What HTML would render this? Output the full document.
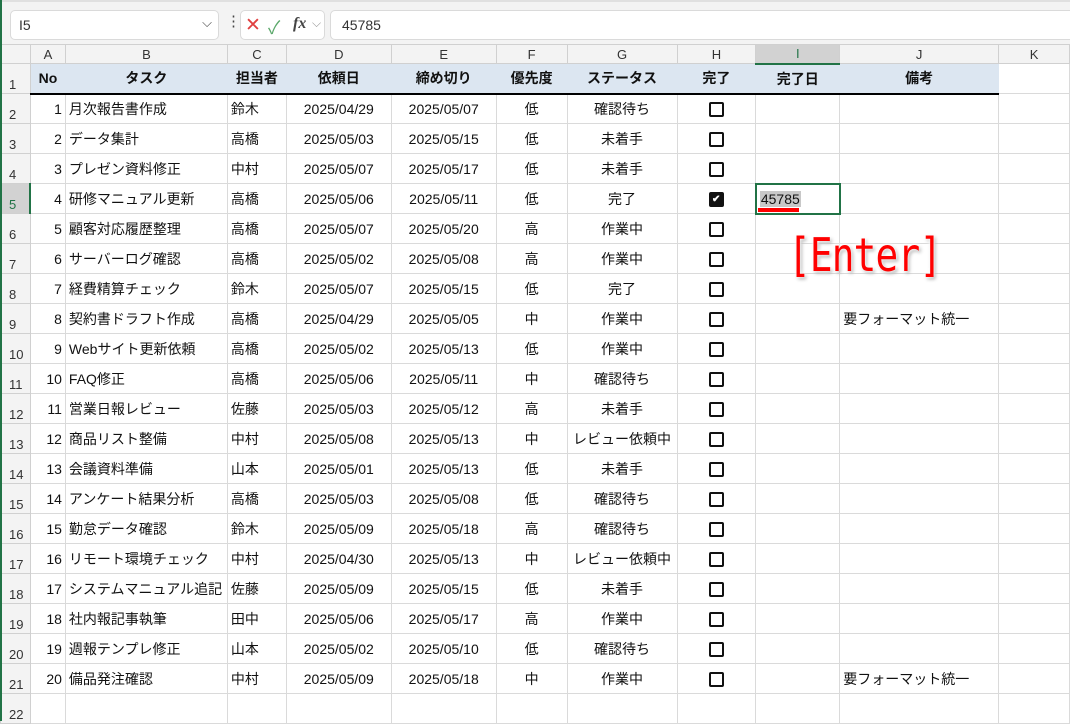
<!DOCTYPE html><html><head><meta charset="utf-8"><style>
body{margin:0;width:1070px;height:721px;overflow:hidden;background:#fff;font-family:"Liberation Sans","Noto Sans CJK JP",sans-serif;position:relative}
.top{position:absolute;left:0;top:0;width:1070px;height:44px;background:#f3f3f3;border-top:2px solid #e0e0e0;box-sizing:border-box}
.box{position:absolute;background:#fff;border:1px solid #dadada;border-radius:5px;box-sizing:border-box}
table{position:absolute;left:0;top:44px;border-collapse:collapse;table-layout:fixed}
td{height:30px;border:1px solid #dadada;padding:0 3px;font-size:14px;color:#111;white-space:nowrap;overflow:hidden;box-sizing:border-box}
tr.ch td{height:19px;background:#f3f3f3;text-align:center;font-size:13px;color:#333;border-color:#d0d0d0;padding:0}
td.rh{background:#f3f3f3;text-align:left;font-size:13px;color:#333;vertical-align:bottom;padding:0 0 1px 8px;border-color:#d0d0d0}
tr.h td.d{background:#dce6f1;font-weight:bold;text-align:center;border-bottom:2px solid #000;border-left-color:#dce6f1;border-right-color:#dce6f1}
.r{text-align:right}.c{text-align:center}
.cb{display:inline-block;width:11px;height:11px;border:2px solid #111;border-radius:2px;vertical-align:middle}
.ck{background:#111;color:#fff;font-size:10px;line-height:11px;text-align:center;font-weight:bold}
</style></head><body>
<div style="position:absolute;left:0;top:0;width:2px;height:721px;background:#217346;z-index:5"></div>
<div class="top">
<div class="box" style="left:10px;top:8px;width:209px;height:30px"><span style="position:absolute;left:8px;top:6px;font-size:14px;color:#333">I5</span><span style="position:absolute;right:6px;top:4px;font-size:13px;color:#444">⌵</span></div>
<span style="position:absolute;left:226px;top:10px;font-size:15px;color:#444">⋮</span>
<div class="box" style="left:240px;top:8px;width:85px;height:30px"><span style="position:absolute;left:4px;top:3px;font-size:19px;color:#e04040">✕</span><span style="position:absolute;left:27px;top:3px;font-size:18px;color:#5aa86a">✓</span><span style="position:absolute;left:52px;top:4px;font-size:16px;font-style:italic;font-family:'Liberation Serif',serif;color:#444;font-weight:bold">fx</span><span style="position:absolute;left:71px;top:5px;font-size:12px;color:#999">⌵</span></div>
<div class="box" style="left:330px;top:8px;width:745px;height:30px"><span style="position:absolute;left:11px;top:6px;font-size:14px;color:#333">45785</span></div>
</div>
<table>
<colgroup><col style="width:30px"><col style="width:35px"><col style="width:162px"><col style="width:59px"><col style="width:105px"><col style="width:105px"><col style="width:71px"><col style="width:110px"><col style="width:79px"><col style="width:84px"><col style="width:159px"><col style="width:71px"></colgroup>
<tr class="ch"><td style="background:#f3f3f3"></td><td>A</td><td>B</td><td>C</td><td>D</td><td>E</td><td>F</td><td>G</td><td>H</td><td style="background:#d2d2d2;border-bottom:2px solid #217346;color:#217346">I</td><td>J</td><td>K</td></tr>
<tr class="h"><td class="rh">1</td><td class="d">No</td><td class="d">タスク</td><td class="d">担当者</td><td class="d">依頼日</td><td class="d">締め切り</td><td class="d">優先度</td><td class="d">ステータス</td><td class="d">完了</td><td class="d">完了日</td><td class="d">備考</td><td></td></tr>
<tr><td class="rh">2</td><td class="r">1</td><td>月次報告書作成</td><td>鈴木</td><td class="c">2025/04/29</td><td class="c">2025/05/07</td><td class="c">低</td><td class="c">確認待ち</td><td class="c"><span class="cb"></span></td><td></td><td></td><td></td></tr>
<tr><td class="rh">3</td><td class="r">2</td><td>データ集計</td><td>高橋</td><td class="c">2025/05/03</td><td class="c">2025/05/15</td><td class="c">低</td><td class="c">未着手</td><td class="c"><span class="cb"></span></td><td></td><td></td><td></td></tr>
<tr><td class="rh">4</td><td class="r">3</td><td>プレゼン資料修正</td><td>中村</td><td class="c">2025/05/07</td><td class="c">2025/05/17</td><td class="c">低</td><td class="c">未着手</td><td class="c"><span class="cb"></span></td><td></td><td></td><td></td></tr>
<tr><td class="rh" style="background:#d2d2d2;color:#217346;border-right:2px solid #217346">5</td><td class="r">4</td><td>研修マニュアル更新</td><td>高橋</td><td class="c">2025/05/06</td><td class="c">2025/05/11</td><td class="c">低</td><td class="c">完了</td><td class="c"><span class="cb ck">✔</span></td><td style="border:2px solid #217346;position:relative;overflow:visible"><span style="background:#c8c8c8;padding:0 1px">45785</span><div style="position:absolute;left:1px;top:23px;width:41px;height:4px;background:#f00"></div></td><td></td><td></td></tr>
<tr><td class="rh">6</td><td class="r">5</td><td>顧客対応履歴整理</td><td>高橋</td><td class="c">2025/05/07</td><td class="c">2025/05/20</td><td class="c">高</td><td class="c">作業中</td><td class="c"><span class="cb"></span></td><td></td><td></td><td></td></tr>
<tr><td class="rh">7</td><td class="r">6</td><td>サーバーログ確認</td><td>高橋</td><td class="c">2025/05/02</td><td class="c">2025/05/08</td><td class="c">高</td><td class="c">作業中</td><td class="c"><span class="cb"></span></td><td></td><td></td><td></td></tr>
<tr><td class="rh">8</td><td class="r">7</td><td>経費精算チェック</td><td>鈴木</td><td class="c">2025/05/07</td><td class="c">2025/05/15</td><td class="c">低</td><td class="c">完了</td><td class="c"><span class="cb"></span></td><td></td><td></td><td></td></tr>
<tr><td class="rh">9</td><td class="r">8</td><td>契約書ドラフト作成</td><td>高橋</td><td class="c">2025/04/29</td><td class="c">2025/05/05</td><td class="c">中</td><td class="c">作業中</td><td class="c"><span class="cb"></span></td><td></td><td>要フォーマット統一</td><td></td></tr>
<tr><td class="rh">10</td><td class="r">9</td><td>Webサイト更新依頼</td><td>高橋</td><td class="c">2025/05/02</td><td class="c">2025/05/13</td><td class="c">低</td><td class="c">作業中</td><td class="c"><span class="cb"></span></td><td></td><td></td><td></td></tr>
<tr><td class="rh">11</td><td class="r">10</td><td>FAQ修正</td><td>高橋</td><td class="c">2025/05/06</td><td class="c">2025/05/11</td><td class="c">中</td><td class="c">確認待ち</td><td class="c"><span class="cb"></span></td><td></td><td></td><td></td></tr>
<tr><td class="rh">12</td><td class="r">11</td><td>営業日報レビュー</td><td>佐藤</td><td class="c">2025/05/03</td><td class="c">2025/05/12</td><td class="c">高</td><td class="c">未着手</td><td class="c"><span class="cb"></span></td><td></td><td></td><td></td></tr>
<tr><td class="rh">13</td><td class="r">12</td><td>商品リスト整備</td><td>中村</td><td class="c">2025/05/08</td><td class="c">2025/05/13</td><td class="c">中</td><td class="c">レビュー依頼中</td><td class="c"><span class="cb"></span></td><td></td><td></td><td></td></tr>
<tr><td class="rh">14</td><td class="r">13</td><td>会議資料準備</td><td>山本</td><td class="c">2025/05/01</td><td class="c">2025/05/13</td><td class="c">低</td><td class="c">未着手</td><td class="c"><span class="cb"></span></td><td></td><td></td><td></td></tr>
<tr><td class="rh">15</td><td class="r">14</td><td>アンケート結果分析</td><td>高橋</td><td class="c">2025/05/03</td><td class="c">2025/05/08</td><td class="c">低</td><td class="c">確認待ち</td><td class="c"><span class="cb"></span></td><td></td><td></td><td></td></tr>
<tr><td class="rh">16</td><td class="r">15</td><td>勤怠データ確認</td><td>鈴木</td><td class="c">2025/05/09</td><td class="c">2025/05/18</td><td class="c">高</td><td class="c">確認待ち</td><td class="c"><span class="cb"></span></td><td></td><td></td><td></td></tr>
<tr><td class="rh">17</td><td class="r">16</td><td>リモート環境チェック</td><td>中村</td><td class="c">2025/04/30</td><td class="c">2025/05/13</td><td class="c">中</td><td class="c">レビュー依頼中</td><td class="c"><span class="cb"></span></td><td></td><td></td><td></td></tr>
<tr><td class="rh">18</td><td class="r">17</td><td>システムマニュアル追記</td><td>佐藤</td><td class="c">2025/05/09</td><td class="c">2025/05/15</td><td class="c">低</td><td class="c">未着手</td><td class="c"><span class="cb"></span></td><td></td><td></td><td></td></tr>
<tr><td class="rh">19</td><td class="r">18</td><td>社内報記事執筆</td><td>田中</td><td class="c">2025/05/06</td><td class="c">2025/05/17</td><td class="c">高</td><td class="c">作業中</td><td class="c"><span class="cb"></span></td><td></td><td></td><td></td></tr>
<tr><td class="rh">20</td><td class="r">19</td><td>週報テンプレ修正</td><td>山本</td><td class="c">2025/05/02</td><td class="c">2025/05/10</td><td class="c">低</td><td class="c">確認待ち</td><td class="c"><span class="cb"></span></td><td></td><td></td><td></td></tr>
<tr><td class="rh">21</td><td class="r">20</td><td>備品発注確認</td><td>中村</td><td class="c">2025/05/09</td><td class="c">2025/05/18</td><td class="c">中</td><td class="c">作業中</td><td class="c"><span class="cb"></span></td><td></td><td>要フォーマット統一</td><td></td></tr>
<tr><td class="rh">22</td><td></td><td></td><td></td><td></td><td></td><td></td><td></td><td></td><td></td><td></td><td></td></tr>
</table>
<div style="position:absolute;left:788px;top:228px;font-family:'DejaVu Sans Mono','Liberation Mono',monospace;font-size:46px;color:#f00;text-shadow:0 0 3px #fff,0 0 5px #fff,2px 2px 4px #999;letter-spacing:-1px;transform:scaleX(0.82);transform-origin:left">[Enter]</div>
</body></html>
